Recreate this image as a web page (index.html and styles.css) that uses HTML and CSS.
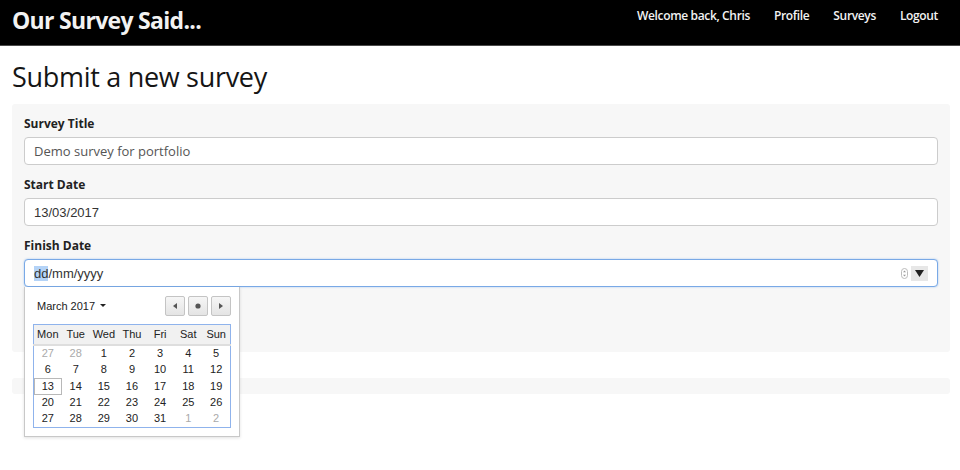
FILE: index.html
```html
<!DOCTYPE html>
<html lang="en">
<head>
<meta charset="utf-8">
<title>Our Survey Said...</title>
<link rel="stylesheet" href="styles.css">
</head>
<body>
<nav class="navbar">
  <a class="brand" href="#">Our Survey Said...</a>
  <ul class="nav-links">
    <li><a href="#">Welcome back, Chris</a></li>
    <li><a href="#">Profile</a></li>
    <li><a href="#">Surveys</a></li>
    <li><a href="#">Logout</a></li>
  </ul>
</nav>
<main class="container">
  <h1 class="page-title">Submit a new survey</h1>
  <form class="well">
    <div class="field">
      <label class="field-label">Survey Title</label>
      <div class="input text-input">Demo survey for portfolio</div>
    </div>
    <div class="field">
      <label class="field-label">Start Date</label>
      <div class="input date-input">13/03/2017</div>
    </div>
    <div class="field picker-field">
      <label class="field-label">Finish Date</label>
      <div class="input date-input focused">
        <span class="date-text"><span class="seg-selected">dd</span>/mm/yyyy</span>
        <span class="date-controls">
          <span class="spinner">
            <svg width="7" height="11" viewBox="0 0 7 11"><rect x="0.5" y="0.5" width="6" height="10" rx="3" fill="#fff" stroke="#bbb"/><path d="M2 4.3 L3.5 2.6 L5 4.3Z M2 6.7 L3.5 8.4 L5 6.7Z" fill="#999"/></svg>
          </span>
          <span class="drop-btn">
            <svg width="9" height="7" viewBox="0 0 9 7"><path d="M0 0 H9 L4.5 7Z" fill="#222"/></svg>
          </span>
        </span>
      </div>
      <div class="calendar">
        <div class="cal-head">
          <span class="cal-month">March 2017 <span class="caret"></span></span>
          <span class="cal-buttons">
            <span class="cal-btn"><svg width="4" height="6" viewBox="0 0 4 6"><path d="M4 0 V6 L0 3Z" fill="#555"/></svg></span>
            <span class="cal-btn"><svg width="6" height="6" viewBox="0 0 6 6"><circle cx="3" cy="3" r="2.6" fill="#555"/></svg></span>
            <span class="cal-btn"><svg width="4" height="6" viewBox="0 0 4 6"><path d="M0 0 V6 L4 3Z" fill="#555"/></svg></span>
          </span>
        </div>
        <table class="cal-table">
          <thead>
            <tr><th>Mon</th><th>Tue</th><th>Wed</th><th>Thu</th><th>Fri</th><th>Sat</th><th>Sun</th></tr>
          </thead>
          <tbody>
            <tr><td class="other">27</td><td class="other">28</td><td>1</td><td>2</td><td>3</td><td>4</td><td>5</td></tr>
            <tr><td>6</td><td>7</td><td>8</td><td>9</td><td>10</td><td>11</td><td>12</td></tr>
            <tr><td class="today">13</td><td>14</td><td>15</td><td>16</td><td>17</td><td>18</td><td>19</td></tr>
            <tr><td>20</td><td>21</td><td>22</td><td>23</td><td>24</td><td>25</td><td>26</td></tr>
            <tr><td>27</td><td>28</td><td>29</td><td>30</td><td>31</td><td class="other">1</td><td class="other">2</td></tr>
          </tbody>
        </table>
      </div>
    </div>
  </form>
  <div class="well-footer"></div>
</main>
</body>
</html>
```

FILE: styles.css
```css
* { box-sizing: border-box; }

html, body { min-height: 470px; }

body {
  margin: 0;
  font-family: "Open Sans", "Liberation Sans", sans-serif;
  font-size: 13px;
  color: #333;
  background: #fff;
}

.navbar {
  display: flex;
  justify-content: space-between;
  align-items: flex-start;
  height: 46px;
  background: #000;
  border-bottom: 1px solid #4a4a4a;
  padding: 0 10px 0 12px;
}

.brand {
  color: #f2f2f2;
  text-decoration: none;
  font-family: "Open Sans", sans-serif;
  font-weight: 700;
  font-size: 23px;
  letter-spacing: -0.7px;
  line-height: 38px;
  padding-top: 1px;
}

.nav-links {
  display: flex;
  list-style: none;
  margin: 0;
  padding: 0;
}

.nav-links a {
  display: block;
  color: #f2f2f2;
  text-decoration: none;
  font-weight: 600;
  font-size: 12px;
  letter-spacing: -0.35px;
  line-height: 31px;
  padding: 0 12px;
}

.container {
  padding: 0 10px 0 12px;
}

.page-title {
  margin: 0;
  padding-top: 14px;
  height: 58px;
  font-weight: 500;
  font-size: 27px;
  line-height: 34px;
  color: #151515;
  letter-spacing: -0.3px;
}

.well {
  background: #f7f7f7;
  border-radius: 3px;
  padding: 11px 12px 65px;
  display: flex;
  flex-direction: column;
  gap: 11px;
}

.field {
  display: flex;
  flex-direction: column;
  gap: 4px;
}

.picker-field { position: relative; }

.field-label {
  font-weight: 700;
  font-size: 12px;
  line-height: 18px;
  color: #222;
}

.input {
  height: 28px;
  background: #fff;
  border: 1px solid #ccc;
  border-radius: 4px;
  padding: 0 9px;
  display: flex;
  align-items: center;
  color: #444;
  font-size: 13px;
}

.text-input { color: #555; }

.date-input {
  font-family: "Liberation Sans", Arial, sans-serif;
  color: #333;
}

.focused {
  border-color: #79a9e6;
  box-shadow: 0 0 2px rgba(102, 160, 233, 0.6);
  justify-content: space-between;
}

.seg-selected {
  background: #b4d3f7;
}

.date-controls {
  display: flex;
  align-items: center;
  gap: 3px;
  padding-right: 0;
}

.spinner { display: flex; }

.drop-btn {
  display: flex;
  align-items: center;
  justify-content: center;
  width: 17px;
  height: 15px;
  background: #e7e7e7;
}

.calendar {
  position: absolute;
  left: 0;
  top: 100%;
  width: 216px;
  height: 150px;
  background: #fff;
  border: 1px solid #c8c8c8;
  border-top: none;
  box-shadow: 0 1px 3px rgba(0, 0, 0, 0.12);
  padding: 8px 8px 0 8px;
  font-family: "Liberation Sans", Arial, sans-serif;
  font-size: 11px;
  color: #222;
  z-index: 2;
}

.cal-head {
  display: flex;
  justify-content: space-between;
  align-items: center;
  height: 21px;
  margin-bottom: 8px;
}

.cal-month {
  padding-left: 4px;
  display: flex;
  align-items: center;
  gap: 2px;
}

.caret {
  display: inline-block;
  width: 0;
  height: 0;
  margin-left: 3px;
  border-left: 3px solid transparent;
  border-right: 3px solid transparent;
  border-top: 3.5px solid #222;
}

.cal-buttons {
  display: flex;
  gap: 3px;
}

.cal-btn {
  width: 20px;
  height: 20px;
  display: flex;
  align-items: center;
  justify-content: center;
  border: 1px solid #c4c4c4;
  border-radius: 2px;
  background: linear-gradient(#f6f6f6, #e4e4e4);
}

.cal-table {
  width: 198px;
  border: 1px solid #8fb3ec;
  border-collapse: collapse;
  table-layout: fixed;
}

.cal-table th {
  font-weight: 400;
  height: 20px;
  line-height: 13px;
  background: #f1f1f1;
  border-bottom: 2px solid #dedede;
  padding: 0;
  text-align: center;
  color: #222;
}

.cal-table td {
  height: 17px;
  line-height: 13px;
  padding: 0;
  text-align: center;
  color: #222;
}

.cal-table tr:nth-child(even) td { height: 16px; }

.cal-table td.other { color: #aaa; }

.cal-table td.today {
  outline: 1px solid #b8b8b8;
  outline-offset: -1px;
}

.well-footer {
  margin-top: 26px;
  height: 16px;
  background: #f7f7f7;
  border-radius: 3px;
}
```
